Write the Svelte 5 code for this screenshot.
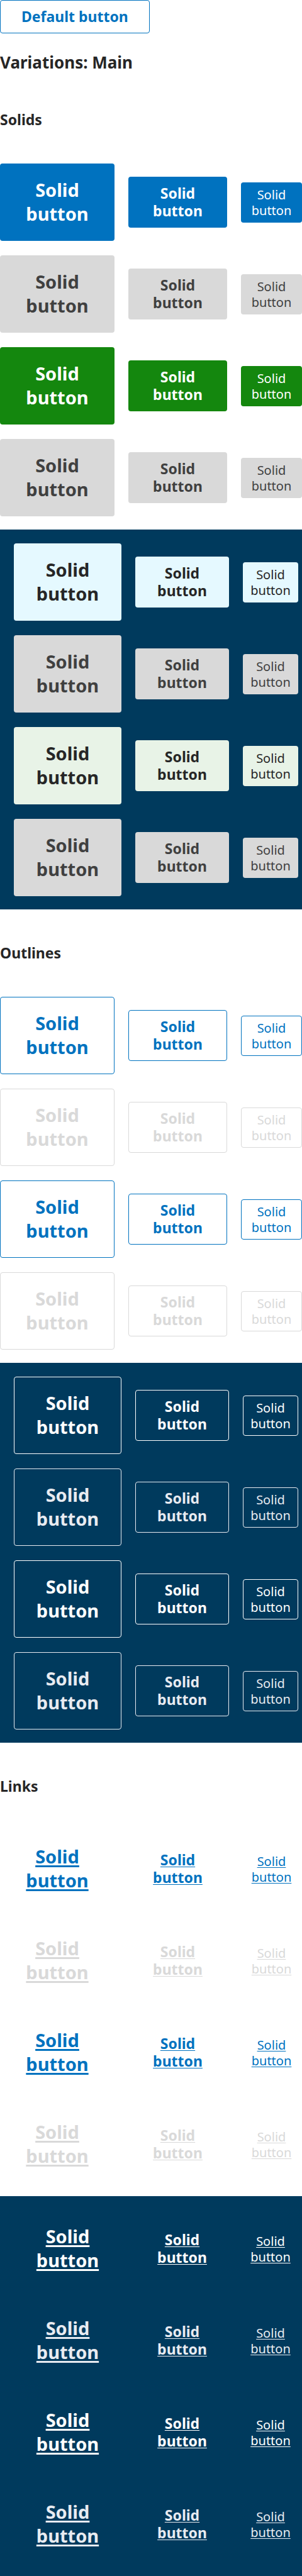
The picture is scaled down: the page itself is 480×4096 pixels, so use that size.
<script>
  const sizes = ['large', 'medium', 'small'];
  const groups = [
    { title: 'Solids', kind: 'solid' },
    { title: 'Outlines', kind: 'outline' },
    { title: 'Links', kind: 'link' },
  ];
  const rows = [
    { tone: 'primary', disabled: false },
    { tone: 'primary', disabled: true },
    { tone: 'success', disabled: false },
    { tone: 'success', disabled: true },
  ];
</script>

<main>
  <button class="btn default outline primary">Default button</button>
  <h2>Variations: Main</h2>

  {#each groups as group}
    <section>
      <h3>{group.title}</h3>
      {#each ['light', 'dark'] as theme}
        <div class="panel {theme}">
          {#each rows as row}
            <div class="row">
              {#each sizes as size}
                <button class="btn {size} {group.kind} {row.tone}" disabled={row.disabled}>Solid button</button>
              {/each}
            </div>
          {/each}
        </div>
      {/each}
    </section>
  {/each}
</main>

<style>
  :global(body) {
    margin: 0;
    background: #fff;
  }

  main {
    font-family: 'Noto Sans', sans-serif;
    color: #262626;
  }

  h2,
  h3 {
    margin: 0;
    font-weight: 700;
  }

  h2 {
    padding: 27px 0 2px;
    font-size: 26px;
    line-height: 39px;
  }

  h3 {
    padding: 52px 0 53px;
    font-size: 23px;
    line-height: 34px;
  }

  .panel {
    display: flex;
    flex-direction: column;
    gap: 23px;
  }

  .light {
    padding-bottom: 21px;
  }

  .dark {
    padding: 22px 6px 21px 22px;
    background: #003a5d;
  }

  .row {
    display: grid;
    grid-template-columns: 182fr 157fr 97fr;
    align-items: center;
    gap: 22px;
  }

  .dark .row {
    grid-template-columns: 171fr 149fr 88fr;
  }

  .btn {
    box-sizing: border-box;
    margin: 0;
    border: 1px solid transparent;
    border-radius: 4px;
    background: none;
    font-family: inherit;
    font-weight: 700;
    text-align: center;
    cursor: pointer;
  }

  .btn:disabled {
    cursor: default;
  }

  .default {
    display: block;
    padding: 11px 33px 12px;
    font-size: 23px;
    line-height: 28px;
  }

  .large {
    padding: 22px 30px 23px;
    font-size: 29px;
    line-height: 38px;
  }

  .medium {
    padding: 11px 32px 12px;
    font-size: 23px;
    line-height: 28px;
  }

  .small {
    padding: 6px 8px;
    font-size: 20px;
    line-height: 25px;
    font-weight: 400;
  }

  .solid.primary {
    background: #0072bf;
    color: #fff;
  }

  .solid.success {
    background: #14870e;
    color: #fff;
  }

  .dark .solid.primary {
    background: #e5f9ff;
    color: #262626;
  }

  .dark .solid.success {
    background: #e8f3e7;
    color: #262626;
  }

  .solid:disabled,
  .dark .solid:disabled {
    background: #d9d9d9;
    color: #404040;
  }

  .outline,
  .link {
    color: #0072bf;
  }

  .outline {
    border-color: currentColor;
  }

  .link {
    text-decoration: underline 1px;
    text-underline-offset: 2px;
  }

  .link.large {
    text-decoration-thickness: 3px;
    text-underline-offset: 3px;
  }

  .outline:disabled,
  .link:disabled {
    color: #d9d9d9;
  }

  .dark .outline,
  .dark .link {
    color: #fff;
  }

  .dark .outline:disabled,
  .dark .link:disabled {
    color: #e8ebf1;
  }
</style>
